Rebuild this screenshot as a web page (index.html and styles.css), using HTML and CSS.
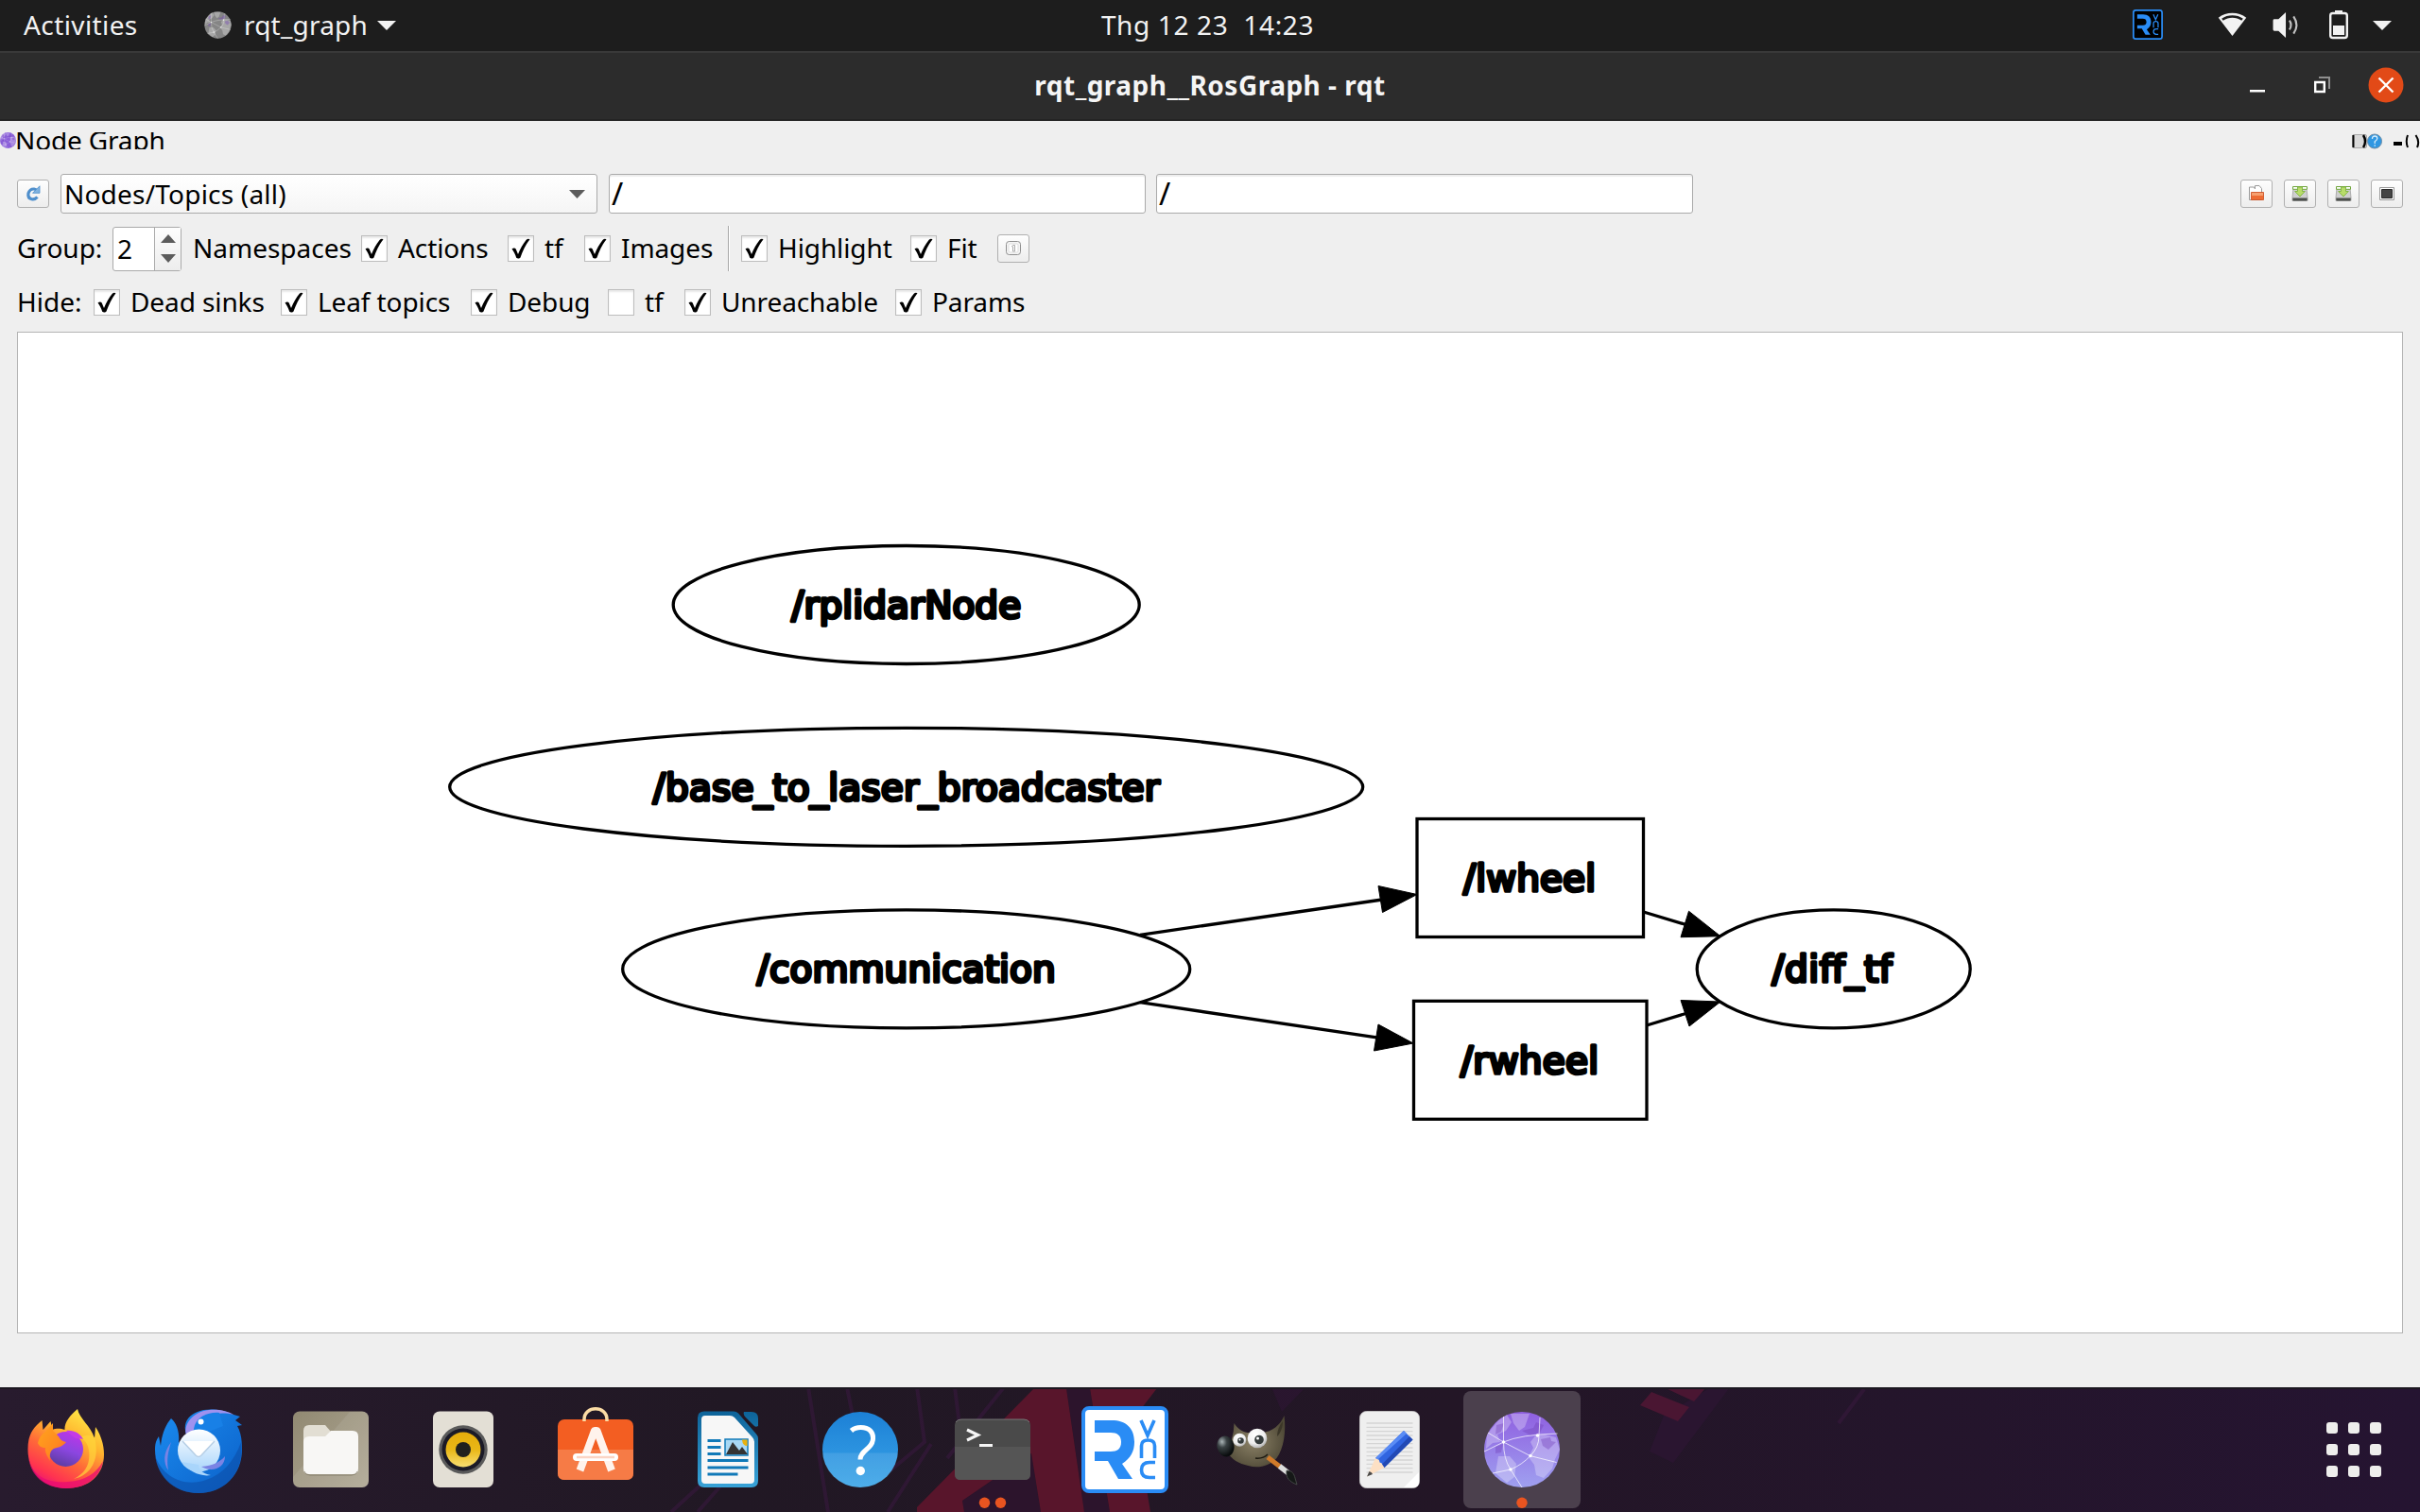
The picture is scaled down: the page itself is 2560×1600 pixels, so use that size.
FILE: index.html
```html
<!DOCTYPE html>
<html lang="vi">
<head>
<meta charset="utf-8">
<title>rqt_graph__RosGraph - rqt</title>
<link rel="stylesheet" href="styles.css">
</head>
<body>
<svg class="defs" width="0" height="0" aria-hidden="true">
  <defs>
    <symbol id="caret" viewBox="0 0 20 10"><path d="M0 0h20L10 10z" fill="currentColor"/></symbol>
    <symbol id="check" viewBox="0 0 28 28"><path d="M4.500 14.500c1.500-1.500 3.500-1.500 4.200 0l2.300 5.500C13.500 14 16.500 8.500 20 4.500c1-1 2.700-1 3.500-.3C19 10 16 16.500 13.500 23.500c-.8 1.200-3.400 1.300-4.300.2C8 20 6.500 17 4.500 14.500z" fill="#000"/></symbol>
    <symbol id="save" viewBox="0 0 34 30">
      <path d="M10 9h14l1 10v3.500H9V19z" fill="#cfcfcf" stroke="#a0a0a0" stroke-width=".8"/>
      <path d="M9.300 19.500h15.400v2q0 1-1 1H10.300q-1 0-1-1z" fill="#4c4f4c"/>
      <path d="M9.500 7.500h15v2.800h-15z" fill="#fff" stroke="#6fa53a" stroke-width="1"/>
      <path d="M14.500 8h5v4.500h2.800L17 18l-5.300-5.500h2.800z" fill="#b8dc6a" stroke="#7eb33f" stroke-width=".9"/>
    </symbol>
    <symbol id="globe" viewBox="0 0 80 80">
      <path d="M3 24L15 9l9-6 5 8-6 9-9 4 3 8-8 1-7 6zM28 2h20l-5 14-6 4-6-8zM64 24l12 3 4 13-5 10-3 10-9 10-8-3-2-11-6-8 5-10-3-6 6-8zM15 47l12 0 7 8-2 14-8 6-12-10z" fill="#fff" opacity=".28"/>
      <path d="M13 14l8-2-3 9-6 3zM12 37l8-3-2 9-6 1zM40 20l12-3 3-6 8 3-4 8-10 3zM60 29l10-2 1 4 5 1-8 8-6-4z" fill="#7140b8" opacity=".38"/>
      <g fill="none" stroke="#fff" stroke-width="1" opacity=".7"><path d="M20.500 5v27L4 22M20.500 32L0 42M20.500 32q18-8 57-9M20.500 32l28 14.500 28 7M20.500 32q0 18 7.500 29l12 19M28 61q12-5 21-14.500 9-9 9-21L59 6M28 61l-19 4"/></g>
      <g fill="#fff"><circle cx="20.500" cy="32" r="1.700"/><circle cx="56.500" cy="25" r="1.700"/><circle cx="49" cy="46.500" r="1.700"/><circle cx="28" cy="61" r="1.700"/></g>
    </symbol>
    <symbol id="vnc" viewBox="0 0 92 92">
      <path d="M14 15h18c15 0 24 8 24 23 0 10-4 17-13 23l11 16H39L28 58H14V48h17c7 0 11-3 11-10s-4-10-11-10H14z" fill="#2a8cf5"/>
      <g fill="none" stroke="#2a8cf5" stroke-width="3.600"><path d="M63 15l7 16 7-16M63.500 55V42q0-6 7-6t7 6v13M78 59.500h-6q-8.500 0-8.500 8t8.500 8h6"/></g>
    </symbol>
    <linearGradient id="gViolet" x1="0" y1="0" x2="0" y2="1"><stop offset="0" stop-color="#8f5fe0"/><stop offset="1" stop-color="#9fa0f0"/></linearGradient>
    <linearGradient id="gFox" x1=".8" y1="0" x2=".25" y2="1"><stop offset="0" stop-color="#fff04a"/><stop offset=".35" stop-color="#ffb42e"/><stop offset=".6" stop-color="#ff6a38"/><stop offset=".85" stop-color="#ff3350"/><stop offset="1" stop-color="#e8107a"/></linearGradient>
    <linearGradient id="gFoxHead" x1="0" y1="0" x2="1" y2="1"><stop offset="0" stop-color="#ffa61c"/><stop offset=".6" stop-color="#ff8a20"/><stop offset="1" stop-color="#ff5b36"/></linearGradient>
    <linearGradient id="gFoxCore" x1=".7" y1="0" x2=".3" y2="1"><stop offset="0" stop-color="#bd35e8"/><stop offset=".5" stop-color="#8b46e0"/><stop offset="1" stop-color="#5a3c9e"/></linearGradient>
    <linearGradient id="gBird" x1="0" y1="0" x2="1" y2="1"><stop offset="0" stop-color="#1b8cf0"/><stop offset="1" stop-color="#0b60c8"/></linearGradient>
    <linearGradient id="gMail" x1="0" y1="0" x2="0" y2="1"><stop offset="0" stop-color="#fff"/><stop offset="1" stop-color="#a9d5fb"/></linearGradient>
    <linearGradient id="gFiles" x1="0" y1="0" x2="1" y2="1"><stop offset="0" stop-color="#918972"/><stop offset="1" stop-color="#b0a895"/></linearGradient>
    <linearGradient id="gCone" x1="0" y1="0" x2="0" y2="1"><stop offset="0" stop-color="#e5ac0c"/><stop offset=".5" stop-color="#e9b716"/><stop offset="1" stop-color="#f8de72"/></linearGradient>
    <linearGradient id="gWriter" x1="0" y1="0" x2="0" y2="1"><stop offset="0" stop-color="#0d6399"/><stop offset="1" stop-color="#38a3d8"/></linearGradient>
    <linearGradient id="gHelp" x1="0" y1="0" x2="0" y2="1"><stop offset="0" stop-color="#1c80d6"/><stop offset="1" stop-color="#3aa5e8"/></linearGradient>
    <radialGradient id="gEye" cx=".4" cy=".3" r=".8"><stop offset="0" stop-color="#fff"/><stop offset=".6" stop-color="#eee"/><stop offset="1" stop-color="#999"/></radialGradient>
    <radialGradient id="gNose" cx=".35" cy=".25" r=".7"><stop offset="0" stop-color="#aab4b6"/><stop offset=".4" stop-color="#3a4244"/><stop offset="1" stop-color="#0a0d0e"/></radialGradient>
    <radialGradient id="gFur" cx=".45" cy=".5" r=".6"><stop offset="0" stop-color="#8c8267"/><stop offset="1" stop-color="#4d4735"/></radialGradient>
    <linearGradient id="gWall" x1="0" y1="0" x2="1" y2="0"><stop offset="0" stop-color="#281b2e"/><stop offset=".3" stop-color="#211824"/><stop offset=".6" stop-color="#231626"/><stop offset="1" stop-color="#251431"/></linearGradient>
  </defs>
</svg>

<header class="topbar">
  <span class="activities">Activities</span>
  <span class="appmenu">
    <svg class="moon" viewBox="0 0 80 80"><circle cx="40" cy="40" r="39" fill="#858585"/><use href="#globe"/></svg>
    <span class="appname">rqt_graph</span>
    <svg class="caret" width="20" height="10"><use href="#caret"/></svg>
  </span>
  <span class="clock">Thg 12 23&nbsp; 14:23</span>
  <span class="tray">
    <svg class="tray-vnc" viewBox="0 0 92 92"><rect x="2.500" y="2.500" width="87" height="87" rx="7" fill="#000" stroke="#2a8cf5" stroke-width="5"/><use href="#vnc"/></svg>
    <svg class="tray-wifi" viewBox="0 0 32 26"><path d="M16 25.500L.8 5.600C9-1.400 23-1.400 31.200 5.600zM4.300 6.500l1.600 2.200C12 4.400 20 4.400 26.100 8.700l1.600-2.200C21 1.800 11 1.800 4.300 6.500z" fill="#f2f2f2" fill-rule="evenodd"/></svg>
    <svg class="tray-volume" viewBox="0 0 30 28"><path d="M0 9q0-1.500 1.500-1.500H6L14 0v28l-8-7.500H1.500Q0 20.500 0 19z" fill="#f2f2f2"/><path d="M18 9q3.500 5 0 10M22.500 4.500q6.500 9.500 0 19" fill="none" stroke="#c4c4c4" stroke-width="2.200"/></svg>
    <svg class="tray-battery" viewBox="0 0 20 30"><path d="M6 0h8v3H6z" fill="#f2f2f2"/><rect x="1.200" y="3" width="17.600" height="26" rx="2.500" fill="none" stroke="#f2f2f2" stroke-width="2.400"/><path d="M4 16h12v10H4z" fill="#f2f2f2"/></svg>
    <svg class="caret" width="20" height="10"><use href="#caret"/></svg>
  </span>
</header>

<div class="titlebar">
  <span class="title">rqt_graph__RosGraph - rqt</span>
  <span class="winbuttons">
    <svg width="16" height="18"><path d="M0 14h16v2.500H0z" fill="#fff"/></svg>
    <svg width="18" height="18"><path d="M5 1h11v12" fill="none" stroke="#8f8f8f" stroke-width="2"/><path d="M1.200 6h9.600v10H1.200z" fill="none" stroke="#fff" stroke-width="2.400"/></svg>
    <svg width="38" height="38"><circle cx="19" cy="19" r="18.500" fill="#e24a17"/><path d="M11.500 11.500l15 15M26.500 11.500l-15 15" stroke="#fff" stroke-width="2.400"/></svg>
  </span>
</div>

<main class="window">
  <div class="dock-title">
    <svg width="17" height="17" viewBox="0 0 80 80"><circle cx="40" cy="40" r="40" fill="#8a5fd8"/><use href="#globe"/></svg>
    <span class="dock-name">Node Graph</span>
    <svg class="dock-tools" width="76" height="20" viewBox="0 0 76 20">
      <rect x="4.500" y="3.500" width="15" height="14" rx="1.500" fill="#d9d9d9" stroke="#aaa"/>
      <path d="M5.500 4v13" stroke="#000" stroke-width="2"/><path d="M16 4q4 6.500 0 13" fill="none" stroke="#000" stroke-width="2.500"/>
      <circle cx="28" cy="10.500" r="7.500" fill="#2f97e2" stroke="#6d8ca5"/>
      <path d="M25.500 8q0-3 2.700-3 2.600 0 2.600 2.500 0 1.500-2.600 3.200V13m0 1.200v1.600" fill="none" stroke="#d5ecfb" stroke-width="1.300"/>
      <path d="M48 11h9v4h-9z" fill="#000"/>
      <path d="M63 4q-2.500 6.500 0 13M71.500 4q4.500 6.500 1.500 13" fill="none" stroke="#000" stroke-width="2"/>
    </svg>
  </div>

  <div class="toolbar">
    <span class="button"><svg width="34" height="30"><path d="M21.500 18.500q-2.500 3-6 2.200-4.500-1.200-3.500-6.200 1.500-4.700 6-4.500 2 .3 2.800 1.600" fill="none" stroke="#4f8fcc" stroke-width="3.200"/><path d="M24 6.800v7.500h-7.500z" fill="#7fb2e0" stroke="#4f8fcc" stroke-width=".8"/></svg></span>
    <span class="combo"><span>Nodes/Topics (all)</span><svg width="18" height="9"><path d="M0 0h17l-8.500 9z" fill="#5c5c5c"/></svg></span>
    <span class="input">/</span>
    <span class="input">/</span>
    <span class="actions">
      <span class="button"><svg width="34" height="30"><path d="M9.500 8h5l1 2V6.500h4.500l2.500 3v12h-13z" fill="#fff" stroke="#9a9a9a"/><path d="M11.500 13.500h13v8h-13z" fill="#ee6c34" stroke="#c94a1c" stroke-width=".8"/><path d="M12 14h12v3H12z" fill="#f6a070"/></svg></span>
      <span class="button"><svg width="34" height="30"><use href="#save"/></svg></span>
      <span class="button"><svg width="34" height="30"><use href="#save"/></svg></span>
      <span class="button"><svg width="34" height="30"><path d="M9.500 8.500h15v13h-15z" fill="#fff" stroke="#999"/><path d="M11.500 10.500h11v9h-11z" fill="#454545" stroke="#2b2b2b"/></svg></span>
    </span>
  </div>

  <div class="options group-row">
    <span>Group:</span>
    <span class="spin"><span class="value">2</span><span class="steps"><svg width="16" height="9"><path d="M0 9h16L8 0z" fill="#5c5c5c"/></svg><svg width="16" height="9"><path d="M0 0h16L8 9z" fill="#5c5c5c"/></svg></span></span>
    <span>Namespaces</span>
    <span class="check"><i><svg><use href="#check"/></svg></i><span>Actions</span></span>
    <span class="check"><i><svg><use href="#check"/></svg></i><span>tf</span></span>
    <span class="check"><i><svg><use href="#check"/></svg></i><span>Images</span></span>
    <span class="separator"></span>
    <span class="check"><i><svg><use href="#check"/></svg></i><span>Highlight</span></span>
    <span class="check"><i><svg><use href="#check"/></svg></i><span>Fit</span></span>
    <span class="button"><svg width="34" height="30"><rect x="9.500" y="7.500" width="15" height="14" rx="3" fill="#f4f4f4" stroke="#8f8f8f"/><rect x="12" y="10" width="10" height="9" rx="1.500" fill="#fff" stroke="#ddd"/><path d="M15 13l2-1.500h1.500v6.500h-2v-5" fill="none" stroke="#aaa"/></svg></span>
  </div>

  <div class="options hide-row">
    <span>Hide:</span>
    <span class="check"><i><svg><use href="#check"/></svg></i><span>Dead sinks</span></span>
    <span class="check"><i><svg><use href="#check"/></svg></i><span>Leaf topics</span></span>
    <span class="check"><i><svg><use href="#check"/></svg></i><span>Debug</span></span>
    <span class="check"><i></i><span>tf</span></span>
    <span class="check"><i><svg><use href="#check"/></svg></i><span>Unreachable</span></span>
    <span class="check"><i><svg><use href="#check"/></svg></i><span>Params</span></span>
  </div>

  <div class="canvas">
    <svg class="graph" viewBox="19 352 2522 1058">
      <g class="shape">
        <ellipse cx="958.700" cy="640" rx="246.500" ry="62.500"/>
        <ellipse cx="958.700" cy="832.800" rx="483" ry="62.500"/>
        <ellipse cx="958.700" cy="1025.400" rx="300" ry="62.500"/>
        <rect x="1499" y="866.500" width="239.500" height="125"/>
        <rect x="1495.500" y="1059.300" width="246.500" height="125"/>
        <ellipse cx="1939.700" cy="1025.400" rx="144.500" ry="62.500"/>
        <path d="M1206 989.300L1462 952M1206 1060.700l252 37.500M1738.600 965l45 13.500M1742 1085l43-13"/>
      </g>
      <path d="M1499 946.500l-41-9 4.500 28zM1495 1104l-37-20-4.500 28zM1820 990.700l-33.500-26.500-8.500 27.500zM1820 1060l-42-1.500 9 27.500z" stroke="#000"/>
      <g class="name">
        <text x="958.700" y="653.500" textLength="243">/rplidarNode</text>
        <text x="958.700" y="846.500" textLength="536">/base_to_laser_broadcaster</text>
        <text x="958.700" y="1039" textLength="316">/communication</text>
        <text x="1618" y="943" textLength="140">/lwheel</text>
        <text x="1618" y="1135.700" textLength="146">/rwheel</text>
        <text x="1938" y="1039" textLength="127">/diff_tf</text>
      </g>
    </svg>
  </div>
</main>

<footer class="dock">
  <svg class="wallpaper" viewBox="0 0 2560 132">
    <path d="M0 0h2560v132H0z" fill="url(#gWall)"/>
    <g fill="none" stroke="#35183a" stroke-width="4" opacity=".7"><path d="M855 0l21 132M896 0l6 30M970 0l8 58-36 30M1062 0l-60 75M985 60l-46 72M710 132l60-55M768 98l-30 34M1010 0l5 40M1972 2l-27 36"/></g>
    <path d="M1345 0h36l-25 26zM1760 30l50-30h20l-60 80-25-12z" fill="#2f1636" opacity=".6"/>
    <path d="M1018 120l73-50 10 62h-81zM1128 1h25l21 131h-27z" fill="#2c142c"/>
    <path d="M1094 1h34l19 131h-46l-10-62-73 50 2 12h-50v-5zM1153 1h71l-34 44 16 20 11 67h-43z" fill="#58152b"/>
    <path d="M1747 5l40 16-12 15-40-17zM1762 1h42l-12 14z" fill="#4a1632"/>
    <path d="M0 0h2560v2H0z" fill="#1b1720"/>
  </svg>

  <svg class="launcher" viewBox="0 0 140 132">
    <path d="M70 107C45 107 29 88 29.500 65c0-14 5-22 15-30l1 10 8-9 2 9c5-2 9-1 13 0C68 37 74 30 82 23c2 10 14 18 18 31l1-12c6 9 9 19 9 29 0 22-16 36-40 36z" fill="url(#gFox)"/>
    <path d="M30 72c2 20 18 30 42 28 18-1 30-9 37-22-3 18-19 29-39 29-23 0-39-14-40-35z" fill="#e80b73" opacity=".75"/>
    <path d="M100 53c6 24-4 40-22 44 12-6 18-16 16-30-1-8-5-12-10-14 8-3 12-3 16 0z" fill="#ffd53a" opacity=".7"/>
    <circle cx="69.500" cy="65.500" r="18.500" fill="url(#gFoxCore)"/>
    <path d="M70 46c8-1 15 3 18 9-3-1-5-1-8-1-4-3-7-5-10-8z" fill="#c43be6"/>
    <path d="M40 59q2-8 8-12l8-9 0 8 6 6q2 5 8 6-4 5-10 6c-6 1-8 5-7 14-3-5-6-10-5-14-4 0-7-2-8-5z" fill="url(#gFoxHead)"/>
  </svg>

  <svg class="launcher" viewBox="0 0 140 132">
    <path d="M116 66c0 26-19 46-46 46S24 92 24 66c0-6 1-10 4-14l2 10c1-12 5-22 11-29 7 6 9 16 8 26l8-9c-4-12 2-20 12-24 8-4 27-3 35 2l10 3-5 4 7 5-5 1c4 7 5 15 5 25z" fill="url(#gBird)"/>
    <path d="M24 72c8 24 32 34 54 26 18-6 30-20 37-40 4 32-17 54-45 54-24 0-43-15-46-40z" fill="#0b4fa8" opacity=".6"/>
    <path d="M57 50c-3-10 6-24 24-26 10-1 20 1 26 5-16-4-32 0-36 14-2 3-6 6-14 7z" fill="#9f92ef"/>
    <path d="M66 40c4-9 14-14 26-13l4 14-20 8-12-1z" fill="#1880e6"/>
    <circle cx="72.500" cy="36.500" r="3" fill="#fff"/>
    <circle cx="70.500" cy="67" r="22.500" fill="url(#gMail)"/>
    <path d="M52 79c8 10 20 16 31 14-9-2-13-6-13-11z" fill="#a9d5fb"/>
    <path d="M53 57l14 15q3 3 6 0l14-15" fill="#fff" stroke="#b7cfe6" stroke-width="1.500"/>
    <path d="M41 58c-9 12-8 22-3 30-2-12 0-20 3-30zM73 84c12-1 20-5 25-11 0 12-13 18-25 11z" fill="#7a83e4"/>
  </svg>

  <svg class="launcher" viewBox="0 0 140 132">
    <rect x="30" y="25.500" width="80" height="80.500" rx="7" fill="url(#gFiles)"/>
    <path d="M90 26h14q6 0 6 6v68q0 6-6 6H36q-6 0-6-6V95z" fill="#fff" opacity=".08"/>
    <path d="M41 62V46q0-6 6-6h17l6 7-5 6z" fill="#e2ded3"/>
    <path d="M41 58q0-6 6-6h17l6-6h23q6 0 6 6v34q0 6-6 6H47q-6 0-6-6z" fill="#f8f7f5"/>
    <path d="M42 89q1 4 6 4h44q5 0 6-4" fill="none" stroke="#6f6853" opacity=".6"/>
  </svg>

  <svg class="launcher" viewBox="0 0 140 132">
    <rect x="38" y="25.500" width="64" height="80.500" rx="7" fill="#e3dfd5"/>
    <circle cx="70" cy="66" r="25.700" fill="#5a5a5a"/><circle cx="70" cy="66" r="22.500" fill="#1b1a26"/>
    <circle cx="70" cy="66" r="18.500" fill="url(#gCone)"/><circle cx="70" cy="66" r="8" fill="#20201e"/>
  </svg>

  <svg class="launcher" viewBox="0 0 140 132">
    <rect x="30" y="34" width="80" height="64" rx="7" fill="#f35e22"/>
    <path d="M30 66h80v25q0 7-7 7H37q-7 0-7-7z" fill="#f67b46"/>
    <path d="M58 36V34c0-15 24-15 24 0v2" fill="none" stroke="#fbdca5" stroke-width="3.500"/>
    <path d="M53.500 88L69 46h2.500L87 88" fill="none" stroke="#fff3ec" stroke-width="8" stroke-linejoin="round"/>
    <rect x="46" y="70" width="48" height="8" rx="4" fill="#fff"/><path d="M50 74h40" stroke="#fbd5c5" stroke-width="2.500"/>
  </svg>

  <svg class="launcher" viewBox="0 0 140 132">
    <path d="M45 25.500h31q3 0 5 2l19 22q2 2 2 5V99q0 7-7 7H45q-7 0-7-7V32.500q0-7 7-7zM87 26h8q7 0 7 7v8q-3 2-5-1l-9-9q-2-3-1-5z" fill="url(#gWriter)"/>
    <path d="M46 30h26q3 0 5 2l19 21q2 2 2 5v40q0 4-4 4H46q-4 0-4-4V34q0-4 4-4z" fill="#f7f7f7"/>
    <path d="M48.500 56.500h14M48.500 63.500h14M48.500 70.500h14M48.500 77.500h43M48.500 85h43M48.500 92h32" stroke="#1079b8" stroke-width="3.200"/>
    <path d="M67 55h24v17H67z" fill="#a8d8f4" stroke="#1079b8" stroke-width="1.500"/><path d="M85 55.500h5.500V62q-5 0-5.500-6.500z" fill="#eab10c"/>
    <path d="M68 71l7-13 7 9 3-4 6 8z" fill="#343434"/>
  </svg>

  <svg class="launcher" viewBox="0 0 140 132">
    <circle cx="70" cy="66" r="40" fill="url(#gHelp)"/><path d="M30 69.500h80C108 91 91 106 70 106S32 91 30 69.500z" fill="#fff" opacity=".1"/>
    <path d="M60.500 46q4-3.500 10-3.500c9 0 13.500 5 13 12-.5 11-13.500 12-13.500 22" fill="none" stroke="#fff" stroke-width="5"/><circle cx="70.300" cy="88.500" r="4.700" fill="#fff"/>
  </svg>

  <svg class="launcher" viewBox="0 0 140 132">
    <rect x="30" y="34" width="80" height="64" rx="6" fill="#4a4a4a"/><path d="M30 63h80v29q0 6-6 6H36q-6 0-6-6z" fill="#555"/>
    <path d="M31 37q2-3 6-3h66q4 0 6 3" fill="none" stroke="#777"/>
    <path d="M43 45l11.500 5.500L43 56" fill="none" stroke="#f5f5f5" stroke-width="3.200"/><path d="M56 61.500h14" stroke="#f5f5f5" stroke-width="3"/>
    <circle cx="61.500" cy="122.300" r="5.700" fill="#e95420"/><circle cx="78.500" cy="122.300" r="5.700" fill="#e95420"/>
  </svg>

  <svg class="launcher" viewBox="0 0 140 132">
    <rect x="26" y="22" width="88" height="88" rx="6" fill="#fff" stroke="#2a8cf5" stroke-width="4"/>
    <use href="#vnc" x="24" y="20" width="92" height="92"/>
  </svg>

  <svg class="launcher" viewBox="0 0 140 132">
    <path d="M45.500 38c3 5 8 9 14 10h16c10-1 19-8 23-18 2 16 0 34-8 45-8 9-20 11-30 8-10-2-18-7-22-14l4-12q3-10 3-19z" fill="url(#gFur)"/>
    <path d="M97 36c0 6-2 12-6 16 0-6 2-11 6-16z" fill="#3b3628"/>
    <ellipse cx="36.500" cy="62.500" rx="9" ry="11" transform="rotate(-12 36.500 62.500)" fill="url(#gNose)"/>
    <circle cx="51.300" cy="55.700" r="7" fill="url(#gEye)"/><circle cx="70" cy="54" r="10.300" fill="url(#gEye)"/>
    <circle cx="52.500" cy="56.500" r="3.300" fill="#343b3b"/><circle cx="72" cy="55.500" r="4.800" fill="#343b3b"/><circle cx="70.500" cy="54" r="1.500" fill="#fff"/><circle cx="51.500" cy="55.500" r="1" fill="#fff"/>
    <path d="M68 75q8 1 13-4" fill="none" stroke="#1f1b12" stroke-width="1.500"/>
    <path d="M81 74l13 10" stroke="#d07a2a" stroke-width="5"/><path d="M93.500 83.500l9 7" stroke="#ddd" stroke-width="5.500"/>
    <path d="M101 88c6 0 8 4 9 8l2 7c-8-3-12-7-11-15z" fill="#151817" stroke="#4a504d" stroke-width=".8"/>
  </svg>

  <svg class="launcher" viewBox="0 0 140 132">
    <rect x="38.500" y="25.500" width="63" height="81" rx="7" fill="#efefef" stroke="#cfcfcf" stroke-width=".8"/>
    <path d="M45.500 38h49M45.500 42.400h49M45.500 46.700h49M45.500 51h49M45.500 55.400h49M45.500 59.700h49M45.500 64h49M45.500 68.400h49M45.500 72.700h49M45.500 77h49M45.500 81.400h49M45.500 85.700h49M45.500 90h49" stroke="#d5d5d5" stroke-width="1.300"/>
    <path d="M101 90v10q0 6-6 6H85z" fill="#fff"/>
    <path d="M46 94.500l9-19.500q4 0 4.500 4.500 4 1 5 5.500z" fill="#fde0c4"/><path d="M46 94.500l2.500-5.500q3 1 3.500 3z" fill="#4a4a4a"/>
    <path d="M55 75l30-29 9.500 9.500L64.500 85q-1-4.500-5-5.500Q59 75 55 75z" fill="#3064e0"/><path d="M55 75l30-29 3 3-30.500 27.500z" fill="#5a8cf5"/><path d="M64.500 85l30-29.500-3.500-3.500L62 81.500z" fill="#2249b5"/>
  </svg>

  <svg class="launcher active" viewBox="0 0 140 132">
    <rect x="8" y="4" width="124" height="124" rx="8" fill="#4b404d"/>
    <circle cx="70" cy="66" r="40" fill="url(#gViolet)"/><use href="#globe" x="30" y="26" width="80" height="80"/>
    <circle cx="70" cy="122.300" r="5.700" fill="#e95420"/>
  </svg>

  <svg class="launcher apps" viewBox="0 0 140 132">
    <g fill="#eeeeec">
      <rect x="41" y="37" width="12" height="12" rx="3"/><rect x="64" y="37" width="12" height="12" rx="3"/><rect x="87" y="37" width="12" height="12" rx="3"/>
      <rect x="41" y="60" width="12" height="12" rx="3"/><rect x="64" y="60" width="12" height="12" rx="3"/><rect x="87" y="60" width="12" height="12" rx="3"/>
      <rect x="41" y="83" width="12" height="12" rx="3"/><rect x="64" y="83" width="12" height="12" rx="3"/><rect x="87" y="83" width="12" height="12" rx="3"/>
    </g>
  </svg>
</footer>
</body>
</html>
```
FILE: styles.css
```css
* { box-sizing: border-box; }

body {
  margin: 0;
  width: 2560px;
  height: 1600px;
  overflow: hidden;
  display: flex;
  flex-direction: column;
  background: #efefef;
  color: #000;
  font: 28px/40px "Noto Sans", "Open Sans", sans-serif;
  white-space: nowrap;
}

svg { display: block; flex: none; overflow: visible; }
.defs { position: absolute; }

/* GNOME top bar */
.topbar {
  display: grid;
  grid-template-columns: 1fr auto 1fr;
  grid-template-areas: "left clock tray";
  align-items: center;
  height: 54px;
  padding: 0 30px 2px 25px;
  background: #1d1d1d;
  color: #f2f2f2;
}
.activities { grid-area: left; letter-spacing: .4px; }
.appmenu { grid-area: left; display: flex; align-items: center; padding-left: 191px; }
.appname { width: 130px; margin: 0 11px 0 13px; letter-spacing: .2px; }
.moon { width: 29px; height: 29px; }
.clock { grid-area: clock; letter-spacing: .65px; }
.tray { grid-area: tray; display: flex; align-items: center; justify-content: flex-end; }
.tray-vnc { width: 32px; height: 32px; margin-right: 58px; }
.tray-wifi { width: 31px; height: 26px; margin-right: 27px; }
.tray-volume { width: 30px; height: 27px; margin-right: 30px; }
.tray-battery { width: 20px; height: 30px; margin-right: 26px; }
.caret { margin-top: 2px; }

/* window title bar */
.titlebar {
  display: grid;
  grid-template-columns: 1fr auto 1fr;
  align-items: center;
  height: 74px;
  padding: 0 17px 3px;
  background: #2c2c2c;
  border-top: 2px solid #393939;
  border-bottom: 2px solid #242424;
  color: #f5f5f5;
}
.title { grid-column: 2; font-weight: 700; letter-spacing: .5px; }
.winbuttons { display: flex; align-items: center; justify-content: flex-end; }
.winbuttons svg:first-child { margin-right: 52px; }
.winbuttons svg:nth-child(2) { margin-right: 39px; }

/* rqt window */
.window { height: 1340px; background: #efefef; }

.dock-title { display: flex; align-items: center; height: 42px; padding-bottom: 1px; }
.dock-name {
  height: 18px;
  line-height: 16px;
  margin-left: -1px;
  overflow: hidden;
  letter-spacing: -.15px;
}
.dock-tools { margin-left: auto; }

.toolbar { display: flex; align-items: center; height: 42px; margin: 14px 18px 0; }
.button {
  width: 34px;
  height: 30px;
  border: 1px solid #b0b0b0;
  border-radius: 3px;
  background: linear-gradient(#fefefe, #ededed);
}
.button svg { margin: -1px; }
.combo {
  display: flex;
  align-items: center;
  justify-content: space-between;
  width: 568px;
  height: 42px;
  margin-left: 12px;
  padding: 0 11px 0 3px;
  border: 1px solid #aaa;
  border-radius: 3px;
  background: linear-gradient(#fff, #f5f5f5);
  letter-spacing: .2px;
}
.input {
  width: 568px;
  height: 42px;
  margin-left: 12px;
  padding-left: 2px;
  border: 1px solid #aaa;
  border-radius: 3px;
  background: #fff;
  box-shadow: inset 0 2px 1px #eee;
  font-size: 33px;
}
.input + .input { margin-left: 11px; }
.actions { display: flex; gap: 12px; margin-left: auto; }

.options { display: grid; align-items: center; margin-left: 18px; }
.options > span:not(.spin):not(.check):not(.button):not(.separator) { padding-bottom: 2px; }
.group-row {
  height: 47px;
  margin-top: 13px;
  grid-template-columns: 101px 85px 178px 155px 81px 152px 14px 179px 92px 34px;
}
.hide-row {
  height: 47px;
  margin-top: 10px;
  grid-template-columns: 81px 198px 201px 145px 81px 223px 140px;
}
.check { display: flex; align-items: center; gap: 11px; }
.check span { padding-bottom: 2px; letter-spacing: -.1px; }
.check i {
  width: 28px;
  height: 28px;
  border: 1px solid #bdbdbd;
  background: #fff;
  box-shadow: inset 0 2px 2px #e8e8e8;
}
.check svg { width: 28px; height: 28px; margin: -1px; }
.spin {
  display: flex;
  width: 73px;
  height: 47px;
  border: 1px solid #aaa;
  border-radius: 3px;
  background: #fff;
}
.value { flex: 1; padding-left: 4px; line-height: 44px; }
.steps {
  display: flex;
  flex-direction: column;
  align-items: center;
  justify-content: center;
  gap: 12px;
  width: 28px;
  border-left: 1px solid #aaa;
  background: linear-gradient(#fdfdfd, #ededed);
}
.separator { width: 2px; height: 48px; background: #a8a8a8; border-right: 1px solid #fff; }

.canvas {
  width: 2524px;
  height: 1060px;
  margin: 8px 18px 0;
  border: 1px solid #b4b4b4;
  background: #fff;
}
.graph { width: 2522px; height: 1058px; }
.shape { fill: none; stroke: #000; stroke-width: 3.3px; }
.name {
  font: 39px "DejaVu Sans", sans-serif;
  text-anchor: middle;
  stroke: #000;
  stroke-width: 3.600px;
  stroke-linejoin: round;
}

/* launcher dock */
.dock { position: relative; display: flex; height: 132px; overflow: hidden; background: #231626; }
.wallpaper { position: absolute; left: 0; top: 0; width: 2560px; height: 132px; }
.launcher { position: relative; width: 140px; height: 132px; }
.apps { margin-left: auto; }
```
